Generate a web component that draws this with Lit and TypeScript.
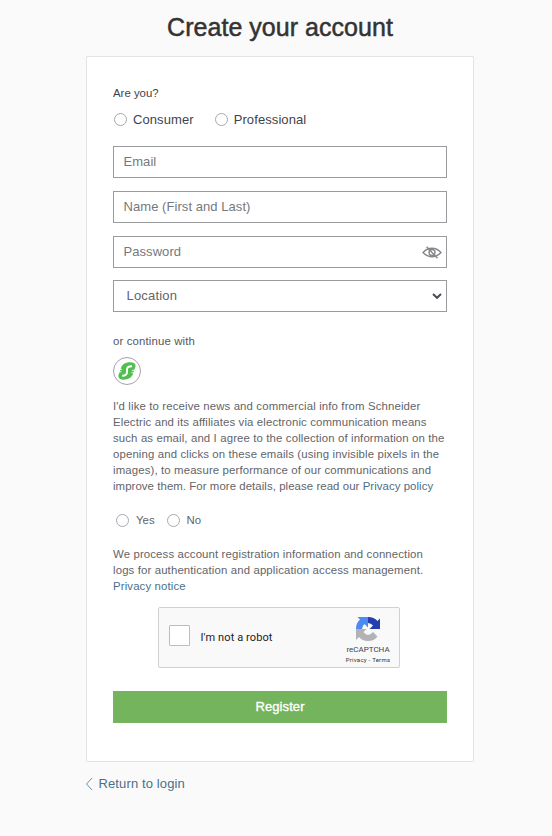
import { LitElement, html, css } from "lit";
import { customElement } from "lit/decorators.js";

@customElement("app-root")
export class AppRoot extends LitElement {
  static styles = css`
    :host {
      display: block;
      height: 836px;
      overflow: hidden;
      background: #fafafa;
      color: #626469;
      font: 13px/16px "Liberation Sans", Arial, sans-serif;
    }
    * { box-sizing: border-box; }
    a { color: #4b6f8a; text-decoration: none; }
    .page { width: 388px; margin-left: 86px; }
    .title {
      margin: 0;
      height: 56px;
      padding-top: 12px;
      text-align: center;
      font-size: 25px;
      line-height: 30px;
      font-weight: 400;
      color: #333;
      -webkit-text-stroke: 0.5px #333;
      letter-spacing: 0.04px;
      white-space: nowrap;
    }
    .card {
      height: 706px;
      padding: 28px 26px 0;
      background: #fff;
      border: 1px solid #e3e3e3;
      border-radius: 1px;
    }
    .label { font-size: 11.4px; color: #42434a; }
    .radios { display: flex; align-items: center; }
    .radio { display: flex; align-items: center; white-space: nowrap; }
    .dot {
      width: 13px;
      height: 13px;
      margin-bottom: 1px;
      border: 1px solid #a6a8b0;
      border-radius: 50%;
      background: #fff;
    }
    .kind { margin: 11px 0 18px 1px; gap: 21px; color: #42434a; letter-spacing: 0.09px; }
    .kind .radio { gap: 6px; }
    .field {
      height: 32px;
      margin-bottom: 13px;
      padding: 0 4px 0 9.5px;
      border: 1px solid #9a9b9f;
      display: flex;
      align-items: center;
      justify-content: space-between;
      color: #76787d;
      letter-spacing: 0.06px;
    }
    .password { margin-bottom: 12px; }
    .select { margin: 0; padding-left: 12.5px; color: #626469; letter-spacing: 0.18px; }
    .continue { margin-top: 21px; font-size: 11.4px; color: #55575c; letter-spacing: 0.14px; }
    .sso {
      width: 28px;
      height: 28px;
      margin-top: 8px;
      border: 1px solid #a7a0ac;
      border-radius: 50%;
      display: grid;
      place-items: center;
    }
    .copy { margin: 0; font-size: 11.4px; letter-spacing: 0.13px; white-space: nowrap; }
    .tight { letter-spacing: 0.07px; }
    .news { margin-top: 13px; }
    .consent { margin: 18px 0 18px 3px; gap: 12px; font-size: 11.4px; }
    .consent .dot { margin-bottom: 0; }
    .consent .radio { gap: 7px; }
    .captcha {
      width: 242px;
      height: 61px;
      margin: 13px 0 0 45px;
      padding: 0 8px 0 10px;
      background: #f9f9f9;
      border: 1px solid #d0d0d0;
      border-radius: 2px;
      display: flex;
      align-items: center;
      color: #222;
      font-family: Roboto, sans-serif;
    }
    .box {
      width: 21px;
      height: 21px;
      margin: 0 10.5px 4px 0;
      background: #fff;
      border: 1px solid #bdbdbd;
      border-radius: 1px;
    }
    .robot { flex: 1; font-size: 11px; letter-spacing: 0.1px; }
    .brand { width: 46px; display: flex; flex-direction: column; align-items: center; padding-top: 4px; }
    .brand-name { font-size: 8px; line-height: 10px; margin-top: 3px; color: #444; }
    .brand-links { font-size: 6px; line-height: 8px; margin-top: 1px; color: #333; white-space: nowrap; letter-spacing: 0.25px; }
    .register {
      display: block;
      width: 334px;
      height: 32px;
      margin-top: 23px;
      padding: 0;
      border: 0;
      background: #73b45c;
      color: #fff;
      font: 13px/30px "Liberation Sans", Arial, sans-serif;
      letter-spacing: 0.1px;
      -webkit-text-stroke: 0.35px #fff;
    }
    .back { display: flex; align-items: center; gap: 5.5px; margin-top: 14px; letter-spacing: 0.12px; }
    .back svg { margin-left: -1px; }
    svg { display: block; flex: none; }
  `;

  private radio(text: string) {
    return html`<label class="radio"><span class="dot"></span>${text}</label>`;
  }

  render() {
    return html`
      <main class="page">
        <h1 class="title">Create your account</h1>
        <section class="card">
          <div class="label">Are you?</div>
          <div class="radios kind">${this.radio("Consumer")}${this.radio("Professional")}</div>
          <div class="field">Email</div>
          <div class="field">Name (First and Last)</div>
          <div class="field password">
            Password
            <svg width="20" height="14" viewBox="0 0 20 14" fill="none" stroke="#85878a" stroke-width="1.4">
              <path d="M1 7.5Q5 3.3 10 3.3T19 7.5Q15 11.7 10 11.7T1 7.5Z" />
              <circle cx="10" cy="7.5" r="3" />
              <path d="M4.6 1.7L15.5 13.3" />
            </svg>
          </div>
          <div class="field select">
            Location
            <svg width="10" height="8" viewBox="0 0 10 8" fill="none" stroke="#4b4c50" stroke-width="2">
              <path d="M1 2L5 5.8L9 2" />
            </svg>
          </div>
          <div class="continue">or continue with</div>
          <div class="sso">
            <svg width="20" height="20" viewBox="0 0 18 18" fill="none">
              <path d="M16.8 4.6Q16.3 1.2 12 1.2C7 1.2 4.2 3.6 3.2 7.4L1.2 13.2Q1.5 16.8 6 16.8C11 16.8 14 14.2 14.8 10.4Z" fill="#4fbf50" />
              <path d="M13.6 4.8Q9.7 4.6 9.1 6.8L8.9 11Q8.2 13.4 4.6 13.2" stroke="#fff" stroke-width="1.7" />
              <path d="M1.5 7.5H4.6M1 9.7H4M13.4 8.4H17M13 10.6H16.4" stroke="#fff" stroke-width="0.8" />
            </svg>
          </div>
          <p class="copy news">
            I'd like to receive news and commercial info from Schneider<br />
            Electric and its affiliates via electronic communication means<br />
            such as email, and I agree to the collection of information on the<br />
            opening and clicks on these emails (using invisible pixels in the<br />
            images), to measure performance of our communications and<br />
            <span class="tight">improve them. For more details, please read our <a>Privacy policy</a></span>
          </p>
          <div class="radios consent">${this.radio("Yes")}${this.radio("No")}</div>
          <p class="copy">
            We process account registration information and connection<br />
            logs for authentication and application access management.<br />
            <a>Privacy notice</a>
          </p>
          <div class="captcha">
            <span class="box"></span>
            <span class="robot">I'm not a robot</span>
            <div class="brand">
              <svg width="26" height="26" viewBox="0 0 26 26">
                <path d="M13 1Q19 1 22.5 5L25 2.5V13H14.5L18 9.5Q16 7 13 7Z" fill="#243fab" />
                <path d="M1 13Q1 7 5 3.5L2.5 1H13V11.5L9.5 8Q7 10 7 13Z" fill="#4b8af0" />
                <path d="M1 13H11.5L8.5 16Q10.5 19 13 19T18 16L22.5 20.5Q19 25 13 25T4 21L1 24Z" fill="#b2b3b5" />
              </svg>
              <span class="brand-name">reCAPTCHA</span>
              <span class="brand-links">Privacy - Terms</span>
            </div>
          </div>
          <button class="register">Register</button>
        </section>
        <a class="back">
          <svg width="8" height="14" viewBox="0 0 8 14" fill="none" stroke="#6a91a8">
            <path d="M7 1L1.5 7L7 13" />
          </svg>
          Return to login
        </a>
      </main>
    `;
  }
}
